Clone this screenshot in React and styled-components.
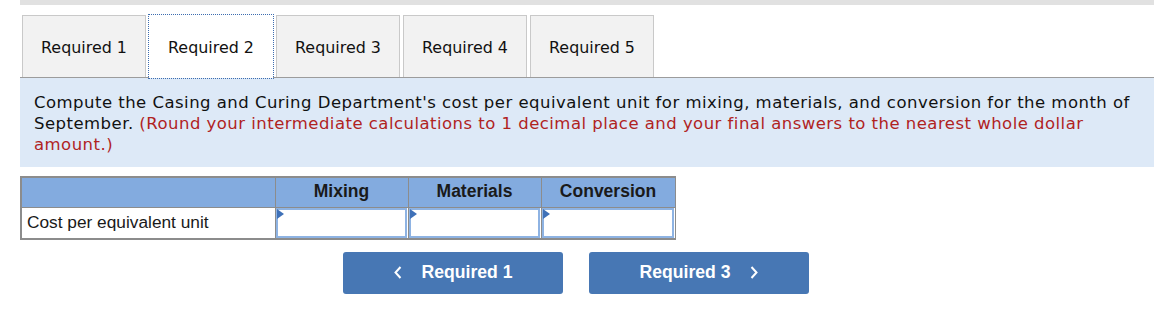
import styled, { createGlobalStyle } from 'styled-components';

const GlobalStyle = createGlobalStyle`
  body {
    margin: 0;
    background: #ffffff;
    font-family: "DejaVu Sans", Verdana, sans-serif;
    color: #111111;
  }
`;

const Page = styled.div`
  width: 1134px;
  margin-left: 20px;
`;

const TopBar = styled.div`
  height: 5px;
  background: #e1e1e1;
`;

const TabList = styled.div`
  display: flex;
  gap: 3px;
  margin-top: 10px;
  padding-left: 2px;
  border-bottom: 1px solid #9c9c9c;
`;

const Tab = styled.div`
  box-sizing: border-box;
  width: 124px;
  height: ${({ active }) => (active ? '63px' : '62px')};
  margin-bottom: ${({ active }) => (active ? '-1px' : '0')};
  display: flex;
  align-items: center;
  justify-content: center;
  padding-top: ${({ active }) => (active ? '0' : '1px')};
  font-size: 15.9px;
  background: ${({ active }) => (active ? '#ffffff' : '#f2f2f2')};
  border: 1px solid ${({ active }) => (active ? '#ffffff' : '#c9c9c9')};
  border-bottom: none;
  outline: ${({ active }) => (active ? '1px dotted #3d6db0' : 'none')};
  outline-offset: 0;
`;

const Instructions = styled.div`
  background: #dde9f7;
  padding: 14px 14px 12px;
  font-size: 16.5px;
  letter-spacing: 0.47px;
  line-height: 21px;
`;

const Hint = styled.span`
  color: #b0231f;
`;

const Table = styled.table`
  margin-top: 9px;
  border-collapse: collapse;
  font-family: "Liberation Sans", Arial, sans-serif;
  font-size: 17.3px;
`;

const HeadCell = styled.th`
  box-sizing: border-box;
  height: 30px;
  width: ${({ w }) => w}px;
  padding: 0;
  background: #83abdf;
  border: 1px solid #8c8c8c;
  border-top-width: 2px;
  border-left-width: ${({ first }) => (first ? '2px' : '1px')};
  font-size: 17.5px;
  font-weight: bold;
  color: #1a1a1a;
  text-align: center;
  vertical-align: top;
  padding-top: 3px;
`;

const LabelCell = styled.td`
  height: 30px;
  padding: 0 0 0 5px;
  border: 1px solid #8c8c8c;
  border-bottom-width: 2px;
  border-left-width: 2px;
  color: #1a1a1a;
`;

const InputCell = styled.td`
  padding: 0;
  border: 1px solid #8c8c8c;
  border-bottom-width: 2px;
`;

const InputBox = styled.div`
  position: relative;
  box-sizing: border-box;
  height: 30px;
  margin: 0 1px 0 0;
  border: 2px solid #8eb3e3;
  background: #ffffff;
`;

const Marker = styled.span`
  position: absolute;
  left: -1px;
  top: -1px;
  width: 0;
  height: 0;
  border-top: 5px solid transparent;
  border-bottom: 5px solid transparent;
  border-left: 7px solid #3f71b8;
`;

const Nav = styled.div`
  display: flex;
  gap: 26px;
  margin-top: 12px;
  padding-left: 323px;
`;

const NavButton = styled.button`
  box-sizing: border-box;
  width: 220px;
  height: 42px;
  display: flex;
  align-items: center;
  justify-content: center;
  gap: 20px;
  padding: 0;
  border: none;
  border-radius: 3px;
  background: #4777b4;
  color: #ffffff;
  font-family: "Liberation Sans", Arial, sans-serif;
  font-size: 17.6px;
  font-weight: bold;
`;

const Chevron = ({ dir }) => (
  <svg width="8" height="13" viewBox="0 0 8 13">
    <polyline
      points={dir === 'left' ? '6.5,1 1.5,6.5 6.5,12' : '1.5,1 6.5,6.5 1.5,12'}
      fill="none"
      stroke="#ffffff"
      strokeWidth="2"
    />
  </svg>
);

const tabs = ['Required 1', 'Required 2', 'Required 3', 'Required 4', 'Required 5'];
const columns = [
  { label: 'Mixing', w: 133 },
  { label: 'Materials', w: 133 },
  { label: 'Conversion', w: 134 },
];

const App = () => {
  return (
    <Page>
      <GlobalStyle />
      <TopBar />
      <TabList>
        {tabs.map((t) => (
          <Tab key={t} active={t === 'Required 2'}>
            {t}
          </Tab>
        ))}
      </TabList>
      <Instructions>
        Compute the Casing and Curing Department's cost per equivalent unit for mixing, materials, and
        conversion for the month of September.{' '}
        <Hint>
          (Round your intermediate calculations to 1 decimal place and your final answers to the nearest
          whole dollar amount.)
        </Hint>
      </Instructions>
      <Table>
        <thead>
          <tr>
            <HeadCell w={254} first />
            {columns.map((c) => (
              <HeadCell key={c.label} w={c.w}>
                {c.label}
              </HeadCell>
            ))}
          </tr>
        </thead>
        <tbody>
          <tr>
            <LabelCell>Cost per equivalent unit</LabelCell>
            {columns.map((c) => (
              <InputCell key={c.label}>
                <InputBox>
                  <Marker />
                </InputBox>
              </InputCell>
            ))}
          </tr>
        </tbody>
      </Table>
      <Nav>
        <NavButton>
          <Chevron dir="left" />
          <span>Required 1</span>
        </NavButton>
        <NavButton>
          <span>Required 3</span>
          <Chevron dir="right" />
        </NavButton>
      </Nav>
    </Page>
  );
};

export default App;
